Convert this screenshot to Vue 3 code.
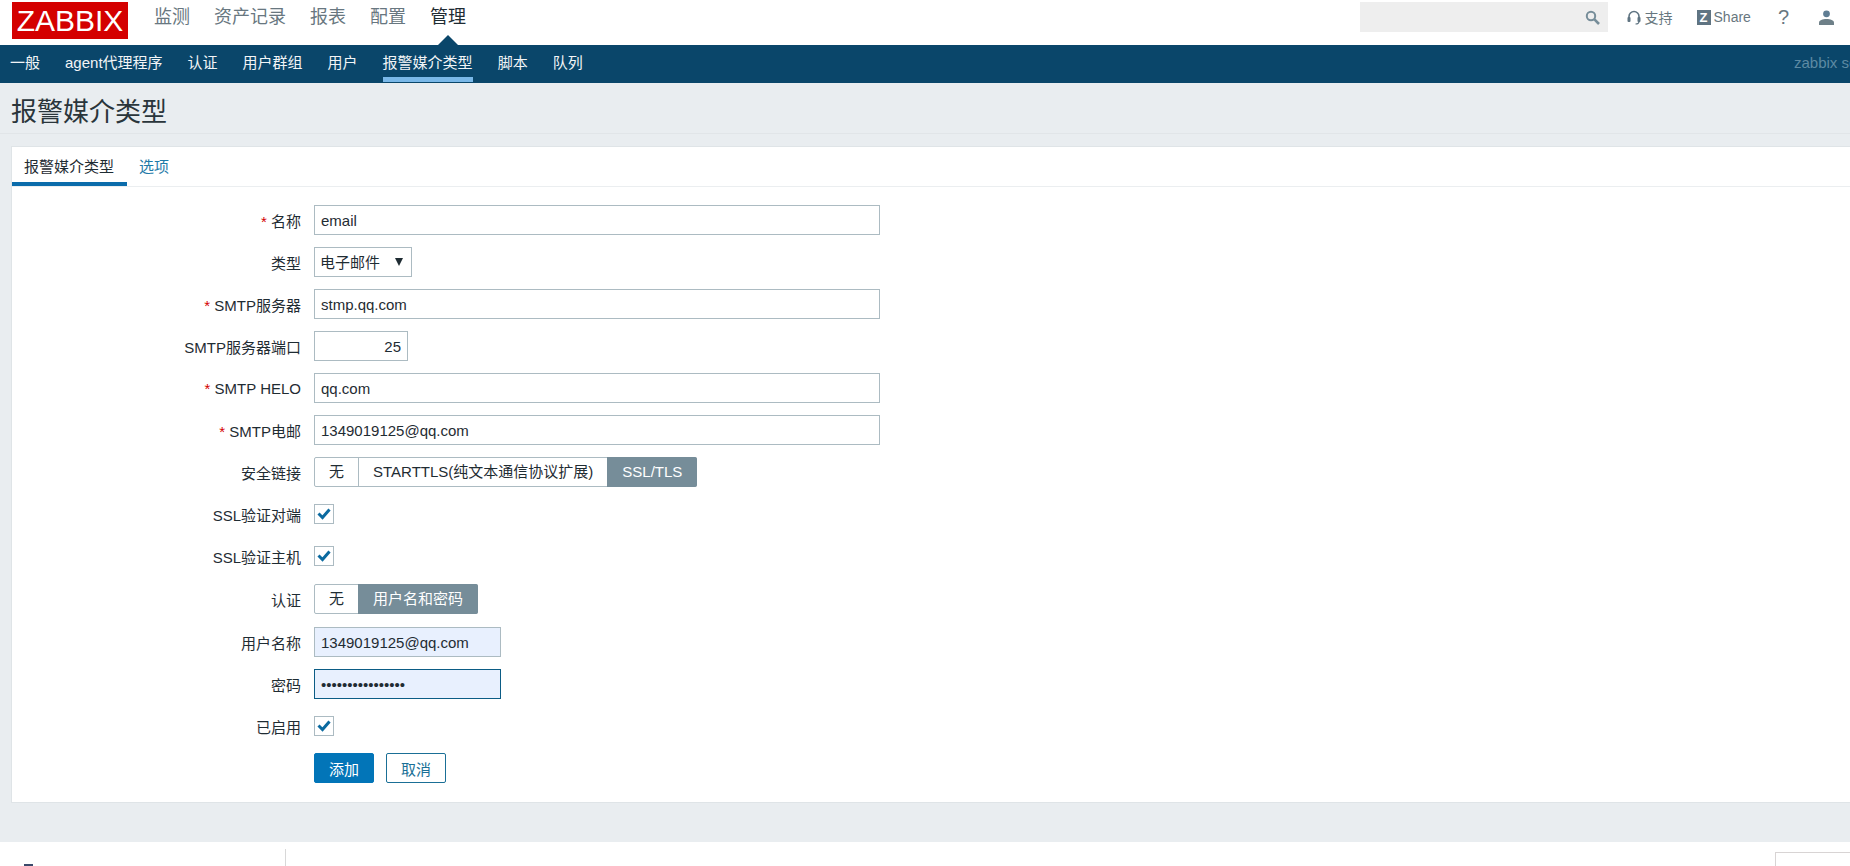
<script setup>
const topNav = ['监测', '资产记录', '报表', '配置', '管理']
const subNav = ['一般', 'agent代理程序', '认证', '用户群组', '用户', '报警媒介类型', '脚本', '队列']
</script>

<template>
  <div class="page">
    <header class="top">
      <div class="logo">ZABBIX</div>
      <nav class="top-nav">
        <a v-for="item in topNav" :key="item" class="top-item" :class="{ active: item === '管理' }">{{ item }}</a>
      </nav>
      <div class="search">
        <svg class="ic" width="15" height="15" viewBox="0 0 15 15" fill="none" stroke="#768d99">
          <circle cx="6" cy="6" r="4.2" stroke-width="2" />
          <path d="M9.2 9.2 14 14" stroke-width="2.6" />
        </svg>
      </div>
      <a class="tool support">
        <svg width="14" height="15" viewBox="0 0 14 15" fill="none" stroke="#5f7482">
          <path d="M2 9V6.5a5 5 0 0 1 10 0V9" stroke-width="1.6" />
          <rect x="0.5" y="7" width="3" height="5" rx="1" fill="#5f7482" stroke="none" />
          <rect x="10.5" y="7" width="3" height="5" rx="1" fill="#5f7482" stroke="none" />
          <path d="M12 11.5c0 1.8-1.5 2.5-3.5 2.5" stroke-width="1.2" />
        </svg>
        <span>支持</span>
      </a>
      <a class="tool share"><b class="z">Z</b><span>Share</span></a>
      <a class="tool help">?</a>
      <a class="tool user">
        <svg width="15" height="15" viewBox="0 0 15 15" fill="#5f7d93">
          <circle cx="7.5" cy="3.8" r="3.4" />
          <path d="M0 15v-2.5C0 10.4 3.6 9 7.5 9s7.5 1.4 7.5 3.5V15z" fill="#6e8088" />
        </svg>
      </a>
    </header>

    <nav class="sub">
      <a v-for="item in subNav" :key="item" class="sub-item" :class="{ active: item === '报警媒介类型' }">{{ item }}</a>
      <span class="server">zabbix server</span>
    </nav>

    <div class="head"><h1>报警媒介类型</h1></div>

    <section class="card">
      <div class="tabs">
        <a class="tab active">报警媒介类型</a>
        <a class="tab">选项</a>
      </div>
      <form class="form">
        <div class="row">
          <label class="lab"><i>*</i> 名称</label>
          <input class="inp wide" value="email" />
        </div>
        <div class="row">
          <label class="lab">类型</label>
          <span class="sel"><select><option>电子邮件</option></select></span>
        </div>
        <div class="row">
          <label class="lab"><i>*</i> SMTP服务器</label>
          <input class="inp wide" value="stmp.qq.com" />
        </div>
        <div class="row">
          <label class="lab">SMTP服务器端口</label>
          <input class="inp port" value="25" />
        </div>
        <div class="row">
          <label class="lab"><i>*</i> SMTP HELO</label>
          <input class="inp wide" value="qq.com" />
        </div>
        <div class="row">
          <label class="lab"><i>*</i> SMTP电邮</label>
          <input class="inp wide" value="1349019125@qq.com" />
        </div>
        <div class="row">
          <label class="lab">安全链接</label>
          <div class="seg">
            <span>无</span><span>STARTTLS(纯文本通信协议扩展)</span><span class="on">SSL/TLS</span>
          </div>
        </div>
        <div class="row">
          <label class="lab">SSL验证对端</label>
          <span class="chk"><svg width="14" height="12" viewBox="0 0 14 12" fill="none" stroke="#0b6aa0" stroke-width="3"><path d="M1.5 5.5 5.5 9.5 12.5 1.5" /></svg></span>
        </div>
        <div class="row">
          <label class="lab">SSL验证主机</label>
          <span class="chk"><svg width="14" height="12" viewBox="0 0 14 12" fill="none" stroke="#0b6aa0" stroke-width="3"><path d="M1.5 5.5 5.5 9.5 12.5 1.5" /></svg></span>
        </div>
        <div class="row nudge">
          <label class="lab">认证</label>
          <div class="seg">
            <span>无</span><span class="on">用户名和密码</span>
          </div>
        </div>
        <div class="row nudge">
          <label class="lab">用户名称</label>
          <input class="inp mid fill" value="1349019125@qq.com" />
        </div>
        <div class="row">
          <label class="lab">密码</label>
          <input class="inp mid fill focus" type="password" value="aaaaaaaaaaaaaaaa" />
        </div>
        <div class="row">
          <label class="lab">已启用</label>
          <span class="chk"><svg width="14" height="12" viewBox="0 0 14 12" fill="none" stroke="#0b6aa0" stroke-width="3"><path d="M1.5 5.5 5.5 9.5 12.5 1.5" /></svg></span>
        </div>
        <div class="row">
          <span class="lab"></span>
          <div class="btns">
            <button type="button" class="btn primary">添加</button>
            <button type="button" class="btn ghost">取消</button>
          </div>
        </div>
      </form>
    </section>

    <footer class="foot">
      <span class="foot-icon"></span>
      <span class="foot-line"></span>
      <div class="foot-box"><span class="foot-frag"></span></div>
    </footer>
  </div>
</template>

<style scoped>
.page {
  width: 100%;
  height: 866px;
  overflow: hidden;
  background: #e9edf0;
  color: #1f2c33;
  font: 15px "Liberation Sans", "Noto Sans CJK SC", sans-serif;
}
.top {
  display: flex;
  align-items: flex-start;
  height: 45px;
  padding-left: 12px;
  background: #fff;
}
.logo {
  width: 116px;
  height: 37px;
  margin-top: 2px;
  background: #d40000;
  color: #fff;
  font-size: 30px;
  line-height: 37px;
  text-align: center;
}
.top-nav {
  display: flex;
  gap: 24px;
  margin-left: 26px;
}
.top-item {
  position: relative;
  font-size: 18px;
  line-height: 34px;
  color: #687780;
}
.top-item.active {
  color: #1f2c33;
}
.top-item.active::after {
  content: "";
  position: absolute;
  left: 8px;
  top: 35px;
  border-left: 10px solid transparent;
  border-right: 10px solid transparent;
  border-bottom: 10px solid #0a466a;
}
.search {
  display: flex;
  align-items: center;
  justify-content: flex-end;
  box-sizing: border-box;
  width: 248px;
  height: 30px;
  margin: 2px 0 0 auto;
  padding-right: 8px;
  background: #eeeeee;
}
.tool {
  display: flex;
  align-items: center;
  height: 34px;
  color: #687780;
  font-size: 14px;
}
.support {
  gap: 4px;
  margin-left: 19px;
}
.share {
  gap: 3px;
  margin-left: 24px;
}
.z {
  display: block;
  width: 14px;
  height: 15px;
  background: #5f7482;
  color: #fff;
  font-size: 13px;
  line-height: 15px;
  text-align: center;
}
.help {
  margin-left: 27px;
  font-size: 20px;
}
.user {
  margin-left: 30px;
  margin-right: 16px;
}
.sub {
  display: flex;
  gap: 25px;
  height: 38px;
  padding-left: 10px;
  background: #0a466a;
}
.sub-item {
  box-sizing: border-box;
  height: 37px;
  padding-top: 7px;
  line-height: 22px;
  color: #f2f5f7;
  white-space: nowrap;
}
.sub-item.active {
  border-bottom: 5px solid #7ab8e8;
}
.server {
  width: 56px;
  margin-left: auto;
  overflow: hidden;
  padding-top: 7px;
  line-height: 22px;
  white-space: nowrap;
  color: #5d8aa3;
}
.head {
  height: 49px;
  padding-top: 1px;
  padding-left: 11px;
  border-bottom: 1px solid #e1e5e8;
}
h1 {
  margin: 0;
  font-size: 26px;
  font-weight: 400;
  line-height: 56px;
  color: #2a353b;
}
.card {
  margin: 12px 0 39px 11px;
  border: 1px solid #dfe4e7;
  border-right: 0;
  background: #fff;
}
.tabs {
  display: flex;
  height: 39px;
  border-bottom: 1px solid #ebeef0;
}
.tab {
  height: 39px;
  box-sizing: border-box;
  padding: 9px 12px 0;
  line-height: 22px;
  color: #1f7aa8;
}
.tab.active {
  padding-right: 13px;
  color: #1f2c33;
  border-bottom: 4px solid #0b6cab;
}
.form {
  display: flex;
  flex-direction: column;
  gap: 12px;
  padding: 18px 0 19px;
}
.row {
  display: flex;
  align-items: center;
  gap: 13px;
  min-height: 30px;
}
.nudge {
  margin-top: 1px;
}
.lab {
  width: 289px;
  text-align: right;
  white-space: nowrap;
}
.lab i {
  color: #d40000;
  font-style: normal;
}
.inp {
  box-sizing: border-box;
  height: 30px;
  padding: 0 6px;
  border: 1px solid #acbbc2;
  background: #fff;
  color: #1f2c33;
  font: inherit;
  outline: none;
}
.wide { width: 566px; }
.port { width: 94px; text-align: right; }
.mid { width: 187px; }
.fill { background: #e8f0fe; }
.focus { border-color: #0b5c85; }
.sel {
  position: relative;
  display: block;
  width: 98px;
  height: 30px;
}
.sel select {
  display: block;
  box-sizing: border-box;
  width: 100%;
  height: 30px;
  padding: 0 0 0 5px;
  border: 1px solid #acbbc2;
  border-radius: 0;
  appearance: none;
  background: #fff;
  color: #1f2c33;
  font: inherit;
}
.sel::after {
  content: "";
  position: absolute;
  left: 81px;
  top: 11px;
  border-left: 4px solid transparent;
  border-right: 4px solid transparent;
  border-top: 8px solid #1f2c33;
  pointer-events: none;
}
.seg {
  display: flex;
  height: 30px;
  box-sizing: border-box;
  border: 1px solid #acbbc2;
  border-radius: 2px;
  background: #fff;
}
.seg span {
  padding: 0 14px;
  line-height: 28px;
  white-space: nowrap;
  border-left: 1px solid #acbbc2;
}
.seg span:first-child {
  border-left: 0;
}
.seg .on {
  margin: -1px -1px -1px 0;
  padding: 1px 15px;
  background: #768d99;
  border-left: 0;
  border-radius: 0 2px 2px 0;
  color: #fff;
}
.chk {
  display: flex;
  align-items: center;
  justify-content: center;
  box-sizing: border-box;
  width: 20px;
  height: 20px;
  border: 1px solid #acbbc2;
  background: #fff;
}
.btns {
  display: flex;
  gap: 12px;
}
.btn {
  box-sizing: border-box;
  width: 60px;
  height: 30px;
  padding: 0;
  border: 1px solid #0275b8;
  border-radius: 2px;
  font: inherit;
}
.primary {
  background: #0275b8;
  color: #fff;
}
.ghost {
  background: #fff;
  border-color: #1a6f96;
  color: #1a6f96;
}
.foot {
  display: flex;
  align-items: flex-start;
  height: 25px;
  overflow: hidden;
  background: #fff;
}
.foot-icon {
  width: 9px;
  height: 3px;
  margin: 22px 0 0 24px;
  background: #3b4a6b;
}
.foot-line {
  width: 1px;
  height: 18px;
  margin: 7px 0 0 252px;
  background: #d8d8d8;
}
.foot-box {
  box-sizing: border-box;
  width: 75px;
  height: 20px;
  margin: 10px 0 0 auto;
  padding: 13px 0 0 25px;
  border: 1px solid #d8d4d4;
  border-right: 0;
  border-bottom: 0;
}
.foot-frag {
  display: block;
  width: 36px;
  height: 3px;
  background: #8a8a8a;
}
</style>

<style>
body { margin: 0; }
</style>
